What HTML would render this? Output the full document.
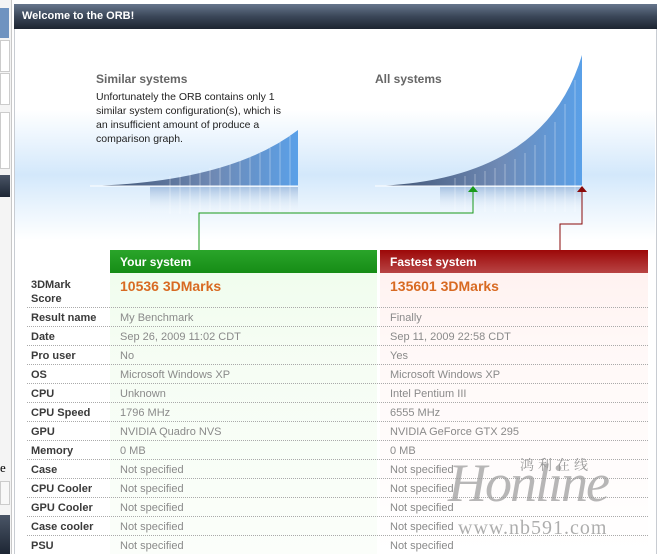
<!DOCTYPE html>
<html><head><meta charset="utf-8"><style>
body{margin:0;width:659px;height:554px;overflow:hidden;background:#fff;font-family:"Liberation Sans",sans-serif;position:relative}
.a{position:absolute}
.lbl{position:absolute;left:31px;font-size:11px;color:#3a3a3a;font-weight:bold}
.v{position:absolute;font-size:11px;color:#8a8a8a}
.sep{position:absolute;left:27px;width:621px;border-top:1px dotted #aaa;height:0}
</style></head><body>
<div class="a" style="left:0;top:0;width:11px;height:554px;background:#f4f4f4;border-right:1px solid #c8c8c8"></div>
<div class="a" style="left:0;top:8px;width:9px;height:30px;background:#6f93c0"></div>
<div class="a" style="left:0;top:40px;width:8px;height:30px;border:1px solid #ccc;background:#fff"></div>
<div class="a" style="left:0;top:73px;width:8px;height:30px;border:1px solid #ccc;background:#fff"></div>
<div class="a" style="left:0;top:112px;width:8px;height:55px;border:1px solid #ccc;background:#fff"></div>
<div class="a" style="left:0;top:175px;width:10px;height:22px;background:linear-gradient(#4a5566,#1d2634)"></div>
<div class="a" style="left:0;top:460px;font-family:'Liberation Serif',serif;font-size:13px">e</div>
<div class="a" style="left:0;top:481px;width:8px;height:22px;border:1px solid #ccc;background:#f8f8f8"></div>
<div class="a" style="left:0;top:515px;width:10px;height:39px;background:linear-gradient(#4a5566,#1d2634)"></div>
<div class="a" style="left:14px;top:4px;width:641px;height:550px;border-left:1px solid #c8ccd2;border-right:1px solid #c8ccd2;background:#fff"></div>
<div class="a" style="left:14px;top:4px;width:643px;height:25px;background:linear-gradient(#66768c,#3a4658 50%,#1c2430);color:#fff;font-weight:bold;font-size:11px;line-height:25px;text-indent:8px">Welcome to the ORB!</div>
<div class="a" style="left:15px;top:110px;width:640px;height:130px;background:linear-gradient(#fff,#d3e8fb 50%,#eaf4fd 75%,#fff)"></div>
<svg class="a" style="left:0;top:0" width="659" height="260">
<defs>
<linearGradient id="g" x1="0" y1="0" x2="1" y2="0"><stop offset="0" stop-color="#3c4f6e"/><stop offset="0.6" stop-color="#6f8ab5"/><stop offset="1" stop-color="#5aa0e8"/></linearGradient>
<linearGradient id="r" x1="0" y1="0" x2="0" y2="1"><stop offset="0" stop-color="#9ab8dc" stop-opacity=".8"/><stop offset="1" stop-color="#fff" stop-opacity="0"/></linearGradient>
</defs>
<path d="M90 186 Q230 182 298 130 L298 186 Z" fill="url(#g)"/>
<rect x="150" y="187" width="148" height="28" fill="url(#r)"/>
<path d="M375 186 Q545 180 582 55 L582 186 Z" fill="url(#g)"/>
<rect x="440" y="187" width="142" height="26" fill="url(#r)"/>
<g stroke="#fff" stroke-opacity=".35" stroke-width="1">
<path d="M170 176V214M180 174V214M190 172V214M200 170V214M210 168V214M220 166V214M230 163V214M240 160V214M250 157V214M260 153V214M270 148V214M280 142V214M290 136V214"/>
<path d="M455 178V212M465 176V212M475 174V212M485 171V212M495 168V212M505 164V212M515 159V212M525 153V212M535 145V212M545 135V212M555 122V212M565 104V212M575 80V212"/>
</g>
<path d="M90 186H298M375 186H582" stroke="#fff" stroke-width="1"/>
<path d="M199 250V213H473V190" fill="none" stroke="#1a9a1a" stroke-width="1"/>
<path d="M468 192L473 186L478 192Z" fill="#1a9a1a"/>
<path d="M560 250V224H582V190" fill="none" stroke="#8a0a0a" stroke-width="1"/>
<path d="M577 192L582 186L587 192Z" fill="#8a0a0a"/>
</svg>
<div class="a" style="left:96px;top:72px;font-size:12px;font-weight:bold;color:#666">Similar systems</div>
<div class="a" style="left:96px;top:90px;font-size:10.5px;line-height:14px;color:#222;width:198px">Unfortunately the ORB contains only 1 similar system configuration(s), which is an insufficient amount of produce a comparison graph.</div>
<div class="a" style="left:375px;top:72px;font-size:12px;font-weight:bold;color:#666">All systems</div>
<div class="a" style="left:110px;top:250px;width:267px;height:304px;background:linear-gradient(#effdec,#f5fdf3 30%,#fbfefa)"></div>
<div class="a" style="left:380px;top:250px;width:268px;height:304px;background:linear-gradient(#fff0ee,#fff8f7 30%,#fff)"></div>
<div class="a" style="left:110px;top:250px;width:267px;height:23px;background:linear-gradient(#2aa52a,#168c16);color:#fff;font-weight:bold;font-size:12px;line-height:25px;text-indent:10px">Your system</div>
<div class="a" style="left:380px;top:250px;width:268px;height:23px;background:linear-gradient(#9c0808,#b84444);color:#fff;font-weight:bold;font-size:12px;line-height:25px;text-indent:10px">Fastest system</div>
<div class="lbl" style="top:278px;line-height:14px">3DMark<br>Score</div>
<div class="a" style="left:120px;top:278px;font-size:14px;font-weight:bold;color:#d86a22">10536 3DMarks</div>
<div class="a" style="left:390px;top:278px;font-size:14px;font-weight:bold;color:#d86a22">135601 3DMarks</div>
<div class="sep" style="top:307px"></div><div class="sep" style="top:326px"></div><div class="sep" style="top:345px"></div><div class="sep" style="top:364px"></div><div class="sep" style="top:383px"></div><div class="sep" style="top:402px"></div><div class="sep" style="top:421px"></div><div class="sep" style="top:440px"></div><div class="sep" style="top:459px"></div><div class="sep" style="top:478px"></div><div class="sep" style="top:497px"></div><div class="sep" style="top:516px"></div><div class="sep" style="top:535px"></div>
<div class="lbl" style="top:312px">Result name</div><div class="v" style="left:120px;top:312px">My Benchmark</div><div class="v" style="left:390px;top:312px">Finally</div>
<div class="lbl" style="top:331px">Date</div><div class="v" style="left:120px;top:331px">Sep 26, 2009 11:02 CDT</div><div class="v" style="left:390px;top:331px">Sep 11, 2009 22:58 CDT</div>
<div class="lbl" style="top:350px">Pro user</div><div class="v" style="left:120px;top:350px">No</div><div class="v" style="left:390px;top:350px">Yes</div>
<div class="lbl" style="top:369px">OS</div><div class="v" style="left:120px;top:369px">Microsoft Windows XP</div><div class="v" style="left:390px;top:369px">Microsoft Windows XP</div>
<div class="lbl" style="top:388px">CPU</div><div class="v" style="left:120px;top:388px">Unknown</div><div class="v" style="left:390px;top:388px">Intel Pentium III</div>
<div class="lbl" style="top:407px">CPU Speed</div><div class="v" style="left:120px;top:407px">1796 MHz</div><div class="v" style="left:390px;top:407px">6555 MHz</div>
<div class="lbl" style="top:426px">GPU</div><div class="v" style="left:120px;top:426px">NVIDIA Quadro NVS</div><div class="v" style="left:390px;top:426px">NVIDIA GeForce GTX 295</div>
<div class="lbl" style="top:445px">Memory</div><div class="v" style="left:120px;top:445px">0 MB</div><div class="v" style="left:390px;top:445px">0 MB</div>
<div class="lbl" style="top:464px">Case</div><div class="v" style="left:120px;top:464px">Not specified</div><div class="v" style="left:390px;top:464px">Not specified</div>
<div class="lbl" style="top:483px">CPU Cooler</div><div class="v" style="left:120px;top:483px">Not specified</div><div class="v" style="left:390px;top:483px">Not specified</div>
<div class="lbl" style="top:502px">GPU Cooler</div><div class="v" style="left:120px;top:502px">Not specified</div><div class="v" style="left:390px;top:502px">Not specified</div>
<div class="lbl" style="top:521px">Case cooler</div><div class="v" style="left:120px;top:521px">Not specified</div><div class="v" style="left:390px;top:521px">Not specified</div>
<div class="lbl" style="top:540px">PSU</div><div class="v" style="left:120px;top:540px">Not specified</div><div class="v" style="left:390px;top:540px">Not specified</div>
<div class="a" style="left:448px;top:452px;font-family:'Liberation Serif',serif;font-style:italic;font-size:54px;color:#999;opacity:.7;letter-spacing:-2px">Honline</div>
<div class="a" style="left:520px;top:455px;font-family:'Noto Serif CJK SC',serif;font-size:14px;color:#999;letter-spacing:4px">鸿利在线</div>
<div class="a" style="left:458px;top:517px;font-family:'Liberation Serif',serif;font-size:20px;color:#999;opacity:.8;letter-spacing:1px">www.nb591.com</div>
</body></html>
